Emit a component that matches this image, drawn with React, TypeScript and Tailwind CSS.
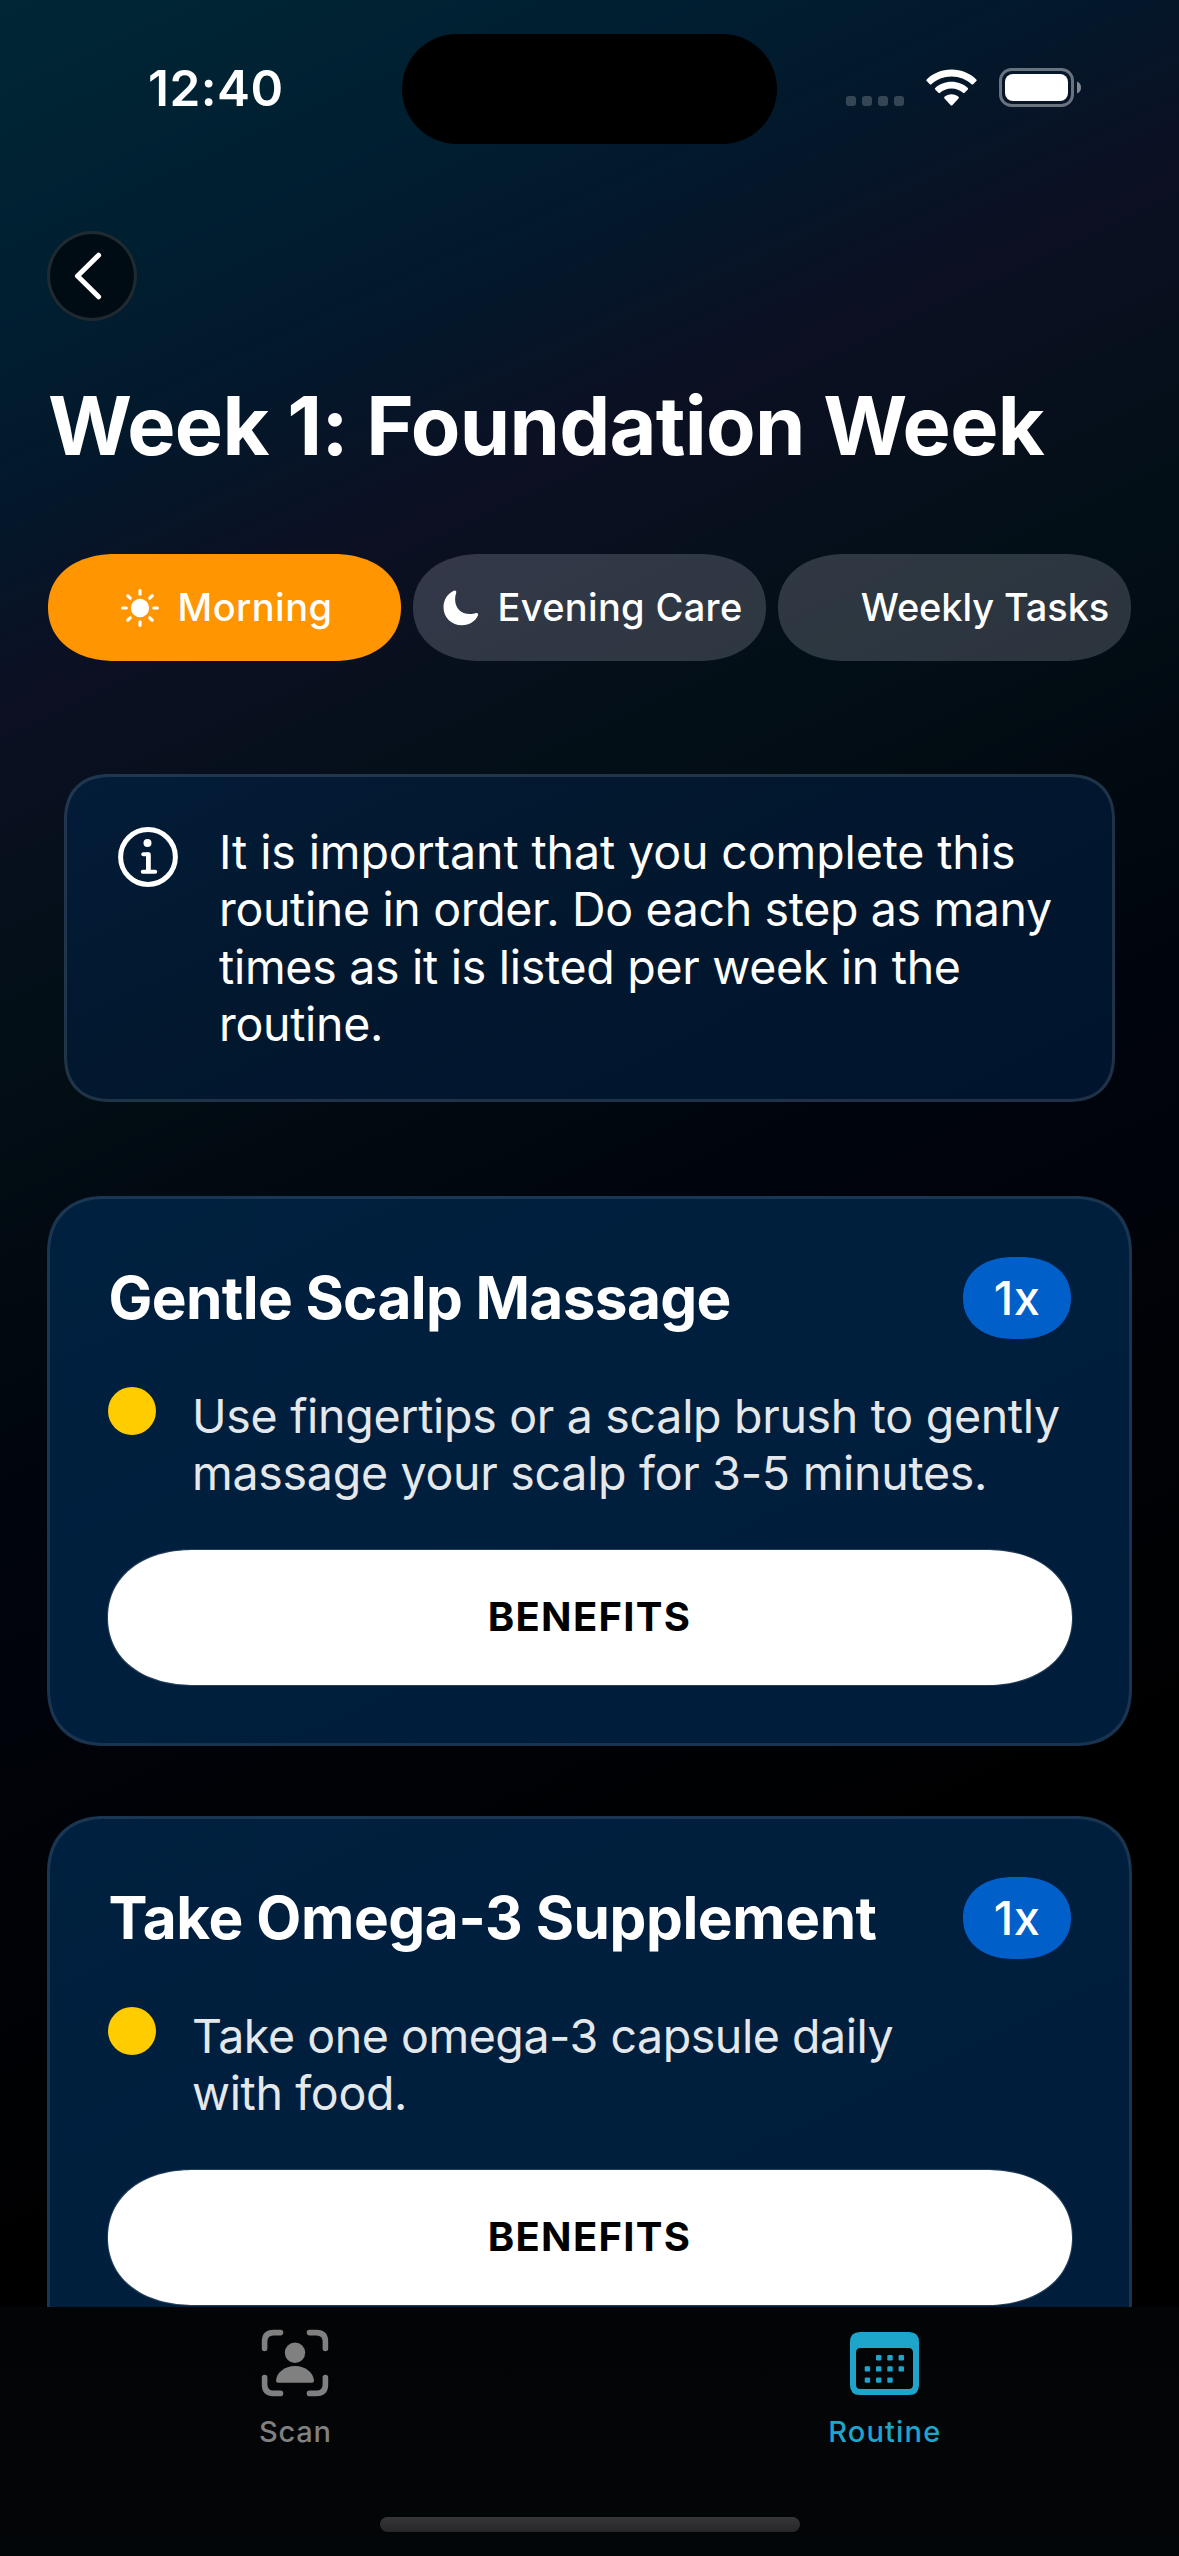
import type { ReactNode } from 'react';

type Line = { text: string; tracking: string };

function StatusBar() {
  return (
    <div className="flex h-[178px] items-start">
      <span className="ml-[148px] mt-[63px] w-[254px] text-[49.5px] font-semibold leading-[50px] tracking-[0.47px]">
        12:40
      </span>
      <div className="mt-[34px] h-[110px] w-[375px] rounded-full bg-black" />
      <div className="ml-[69px] mt-[96px] flex gap-[6px]">
        {[0, 1, 2, 3].map((i) => (
          <span key={i} className="size-[10px] rounded-[3px] bg-white/20" />
        ))}
      </div>
      <svg className="ml-[22px] mt-[68.5px] h-[38px] w-[51px]" viewBox="0 0 51 38" fill="white">
        <path d="M25.5 0.5C35.4 0.5 44.4 4.4 50.3 10.4q.8.8 0 1.600l-3.100 3.200q-.8.8-1.600 0C40.400 10.400 33.300 7.500 25.500 7.500S10.600 10.400 5.400 15.200q-.8.8-1.600 0L.7 12q-.8-.8 0-1.600C6.600 4.400 15.600.5 25.500.5Z" />
        <path d="M25.500 12.800c6.300 0 12 2.300 16.300 6.200q.8.8 0 1.600l-3.200 3.200q-.8.8-1.600 0c-3-2.700-7-4.300-11.500-4.300s-8.500 1.600-11.500 4.300q-.8.8-1.600 0l-3.200-3.200q-.8-.8 0-1.600c4.300-3.900 10-6.200 16.300-6.200Z" />
        <path d="M25.500 25.200c2.700 0 5.200 1 7 2.600q.8.8 0 1.700l-6.200 6.700q-.8.8-1.600 0l-6.200-6.700q-.8-.9 0-1.700c1.800-1.600 4.300-2.600 7-2.600Z" />
      </svg>
      <svg className="ml-[22px] mt-[68px] h-[39px] w-[83px]" viewBox="0 0 83 39">
        <rect x="1.500" y="1.500" width="72" height="36" rx="11" fill="none" stroke="white" strokeOpacity="0.4" strokeWidth="3" />
        <rect x="6" y="6" width="63" height="27" rx="8" fill="white" />
        <path d="M78 13.500q4 1.600 4 6t-4 6Z" fill="white" fillOpacity="0.5" />
      </svg>
    </div>
  );
}

function SunIcon() {
  return (
    <svg className="h-[40px] w-[44px]" viewBox="-22 -20 44 40" stroke="white" strokeWidth="3.200" strokeLinecap="round">
      <circle r="9.200" fill="white" stroke="none" />
      {[0, 45, 90, 135, 180, 225, 270, 315].map((a) => (
        <path key={a} d="M0-13.800V-17.300" transform={`rotate(${a})`} />
      ))}
    </svg>
  );
}

function MoonIcon() {
  return (
    <svg className="h-[36px] w-[44px]" viewBox="0 0 44 36" fill="white">
      <path d="M15.800.7c1.500-.6 2.900.4 2.400 2C17.500 5 17.100 7 17.100 9.300c0 9 5.700 14.700 14.800 14.700 2.400 0 4.200-.4 6-1 1.700-.5 2.700.8 2.100 2.300C37.400 31.400 31.300 35.300 24 35.300 13.700 35.300 5.500 27.500 5.500 17.200 5.500 9.900 9.600 3.300 15.800.7Z" />
    </svg>
  );
}

function InfoIcon() {
  return (
    <svg className="mt-[3px] size-[60px] shrink-0" viewBox="0 0 60 60" fill="none" stroke="white">
      <circle cx="30" cy="30" r="27.400" strokeWidth="5" />
      <circle cx="29.500" cy="16" r="4" fill="white" stroke="none" />
      <path d="M25.300 27.200H30" strokeWidth="4" strokeLinecap="round" />
      <path d="M30.400 27.600V44" strokeWidth="4.800" strokeLinecap="round" />
      <path d="M24.800 44.700H37.200" strokeWidth="4" strokeLinecap="round" />
    </svg>
  );
}

function Tab({ label, icon, active, tracking }: { label: string; icon?: ReactNode; active?: boolean; tracking: string }) {
  return (
    <button
      className={`flex h-[107px] flex-1 items-center justify-center gap-[15px] rounded-[68px/53.500px] pl-[2px] [corner-shape:superellipse(1.120)] ${active ? 'bg-[#ff9500]' : 'bg-[#f0f0ff]/[0.18]'}`}
    >
      <span className="flex w-[44px]">{icon}</span>
      <span className={`mb-[2px] whitespace-nowrap text-[38px] font-medium leading-[46px] ${tracking}`}>{label}</span>
    </button>
  );
}

function TextLines({ lines, className }: { lines: Line[]; className: string }) {
  return (
    <p className={`text-[46.500px] leading-[57.300px] ${className}`}>
      {lines.map((l) => (
        <span key={l.text} className={`block whitespace-nowrap ${l.tracking}`}>
          {l.text}
        </span>
      ))}
    </p>
  );
}

function TaskCard({ title, titleTracking, lines }: { title: string; titleTracking: string; lines: Line[] }) {
  return (
    <section className="mx-[47px] h-[550px] shrink-0 rounded-[58px] border-[3px] border-white/[0.1] bg-[linear-gradient(155deg,#00203f,#001d3b)] bg-origin-border px-[57.500px] pt-[58px] [corner-shape:superellipse(1.200)]">
      <div className="flex h-[82px] items-center justify-between">
        <h2 className={`ml-px whitespace-nowrap text-[58.500px] font-bold leading-[70px] ${titleTracking}`}>{title}</h2>
        <span className="mr-[0.500px] flex h-[82px] w-[108px] items-center justify-center rounded-[50px/41px] bg-[#005fc8] text-[47px] font-medium leading-[56px] tracking-[0.500px] [corner-shape:superellipse(1.120)]">
          1x
        </span>
      </div>
      <div className="mt-[48px] flex">
        <span className="size-[48px] rounded-full bg-[#ffcc00]" />
        <TextLines lines={lines} className="ml-[36.500px] mt-px text-[#e5e8eb]" />
      </div>
      <button className="mt-[47px] flex h-[135px] w-full items-center justify-center rounded-[86px/67.500px] bg-white text-[40px] font-bold leading-[48px] tracking-[1.290px] text-black ring-1 ring-white/15 [corner-shape:superellipse(1.120)]">
        BENEFITS
      </button>
    </section>
  );
}

function ScanIcon() {
  return (
    <svg className="size-[68px]" viewBox="0 0 68 68" fill="none" stroke="#808080" strokeWidth="5.600" strokeLinecap="round">
      <path d="M3.600 19.500V12.500Q3.600 3.600 12.500 3.600H19.500M48.500 3.600H55.500Q64.400 3.600 64.400 12.500V19.500M64.400 48.500V55.500Q64.400 64.400 55.500 64.400H48.500M19.500 64.400H12.500Q3.600 64.400 3.600 55.500V48.500" />
      <circle cx="34" cy="23.800" r="10.200" fill="#808080" stroke="none" />
      <path d="M17 53.800Q15 53.800 15 51.500C15.500 44 23.500 37 34 37S52.500 44 53 51.500Q53 53.800 51 53.800Z" fill="#808080" stroke="none" />
    </svg>
  );
}

const CALENDAR_DOTS = [
  [26, 23], [37.300, 23], [48.600, 23],
  [14.700, 34.200], [26, 34.200], [37.300, 34.200], [48.600, 34.200],
  [14.700, 45.400], [26, 45.400], [37.300, 45.400],
];

function CalendarIcon() {
  return (
    <svg className="h-[63px] w-[69px]" viewBox="0 0 69 63" fill="#1ea5cc">
      <path
        fillRule="evenodd"
        d="M10 0H59Q69 0 69 10V53Q69 63 59 63H10Q0 63 0 53V10Q0 0 10 0ZM10.500 16Q6 16 6 20.500V52.500Q6 57 10.500 57H58.500Q63 57 63 52.500V20.500Q63 16 58.500 16Z"
      />
      {CALENDAR_DOTS.map(([x, y]) => (
        <rect key={`${x}-${y}`} x={x} y={y} width="5.400" height="5.400" rx="1.200" />
      ))}
    </svg>
  );
}

export default function App() {
  return (
    <div className="flex h-[2556px] w-[1179px] flex-col overflow-hidden bg-[linear-gradient(155.240deg,#002736_0%,#001f31_10%,#03182b_16%,#0c1023_22.500%,#030f17_33%,#020c13_38%,#00040c_50%,#000000_75%)] font-['Inter',sans-serif] text-white">
      <StatusBar />
      <main className="flex h-[2129px] flex-col overflow-hidden [font-feature-settings:'calt'_0]">
        <button className="ml-[46.500px] mt-[53px] flex size-[90px] shrink-0 items-center justify-center rounded-full border-[3px] border-white/[0.12] bg-black/60">
          <svg className="mr-[7px] h-[48px] w-[28px]" viewBox="0 0 28 48" fill="none" stroke="white" strokeWidth="5" strokeLinecap="round" strokeLinejoin="round">
            <path d="M24.600 3.200L3.500 24L24.600 44.800" />
          </svg>
        </button>
        <h1 className="ml-[48px] mt-[55px] shrink-0 whitespace-nowrap text-[81px] font-bold leading-[100px] tracking-[-0.700px]">
          Week 1: Foundation Week
        </h1>
        <div className="mx-[48px] mt-[78px] flex shrink-0 gap-[12px]">
          <Tab label="Morning" icon={<SunIcon />} active tracking="tracking-[0.480px]" />
          <Tab label="Evening Care" icon={<MoonIcon />} tracking="tracking-[0.340px]" />
          <Tab label="Weekly Tasks" tracking="tracking-[-0.110px]" />
        </div>
        <section className="mx-[64px] mt-[113px] flex h-[328px] shrink-0 rounded-[46px] border-[3px] border-white/[0.12] bg-[linear-gradient(155deg,#031c38,#02182f_35%,#00152d)] bg-origin-border pl-[51px] pt-[47px] [corner-shape:superellipse(1.200)]">
          <InfoIcon />
          <TextLines
            className="ml-[41px]"
            lines={[
              { text: 'It is important that you complete this', tracking: 'tracking-[-0.110px]' },
              { text: 'routine in order. Do each step as many', tracking: 'tracking-[-0.350px]' },
              { text: 'times as it is listed per week in the', tracking: 'tracking-[-0.290px]' },
              { text: 'routine.', tracking: 'tracking-[-0.300px]' },
            ]}
          />
        </section>
        <div className="mt-[94px] flex shrink-0 flex-col gap-[70px]">
          <TaskCard
            title="Gentle Scalp Massage"
            titleTracking="tracking-[-0.630px]"
            lines={[
              { text: 'Use fingertips or a scalp brush to gently', tracking: 'tracking-[-0.300px]' },
              { text: 'massage your scalp for 3-5 minutes.', tracking: 'tracking-[-0.280px]' },
            ]}
          />
          <TaskCard
            title="Take Omega-3 Supplement"
            titleTracking="tracking-[-0.440px]"
            lines={[
              { text: 'Take one omega-3 capsule daily', tracking: 'tracking-[-0.440px]' },
              { text: 'with food.', tracking: 'tracking-[-0.350px]' },
            ]}
          />
        </div>
      </main>
      <nav className="flex h-[249px] shrink-0 flex-col items-center bg-[linear-gradient(180deg,#030406,#030608)] text-[29px] font-medium leading-[36px]">
        <div className="flex w-full">
          <div className="flex flex-1 flex-col items-center pt-[22px] text-[#808080]">
            <ScanIcon />
            <span className="mt-[17px] pl-px tracking-[0.760px]">Scan</span>
          </div>
          <div className="flex flex-1 flex-col items-center pt-[25px] text-[#1ea5cc]">
            <CalendarIcon />
            <span className="mt-[19px] pl-px tracking-[1.170px]">Routine</span>
          </div>
        </div>
        <div className="mt-[67px] h-[15px] w-[420px] rounded-full bg-[linear-gradient(180deg,#363638,#27272a)]" />
      </nav>
    </div>
  );
}
